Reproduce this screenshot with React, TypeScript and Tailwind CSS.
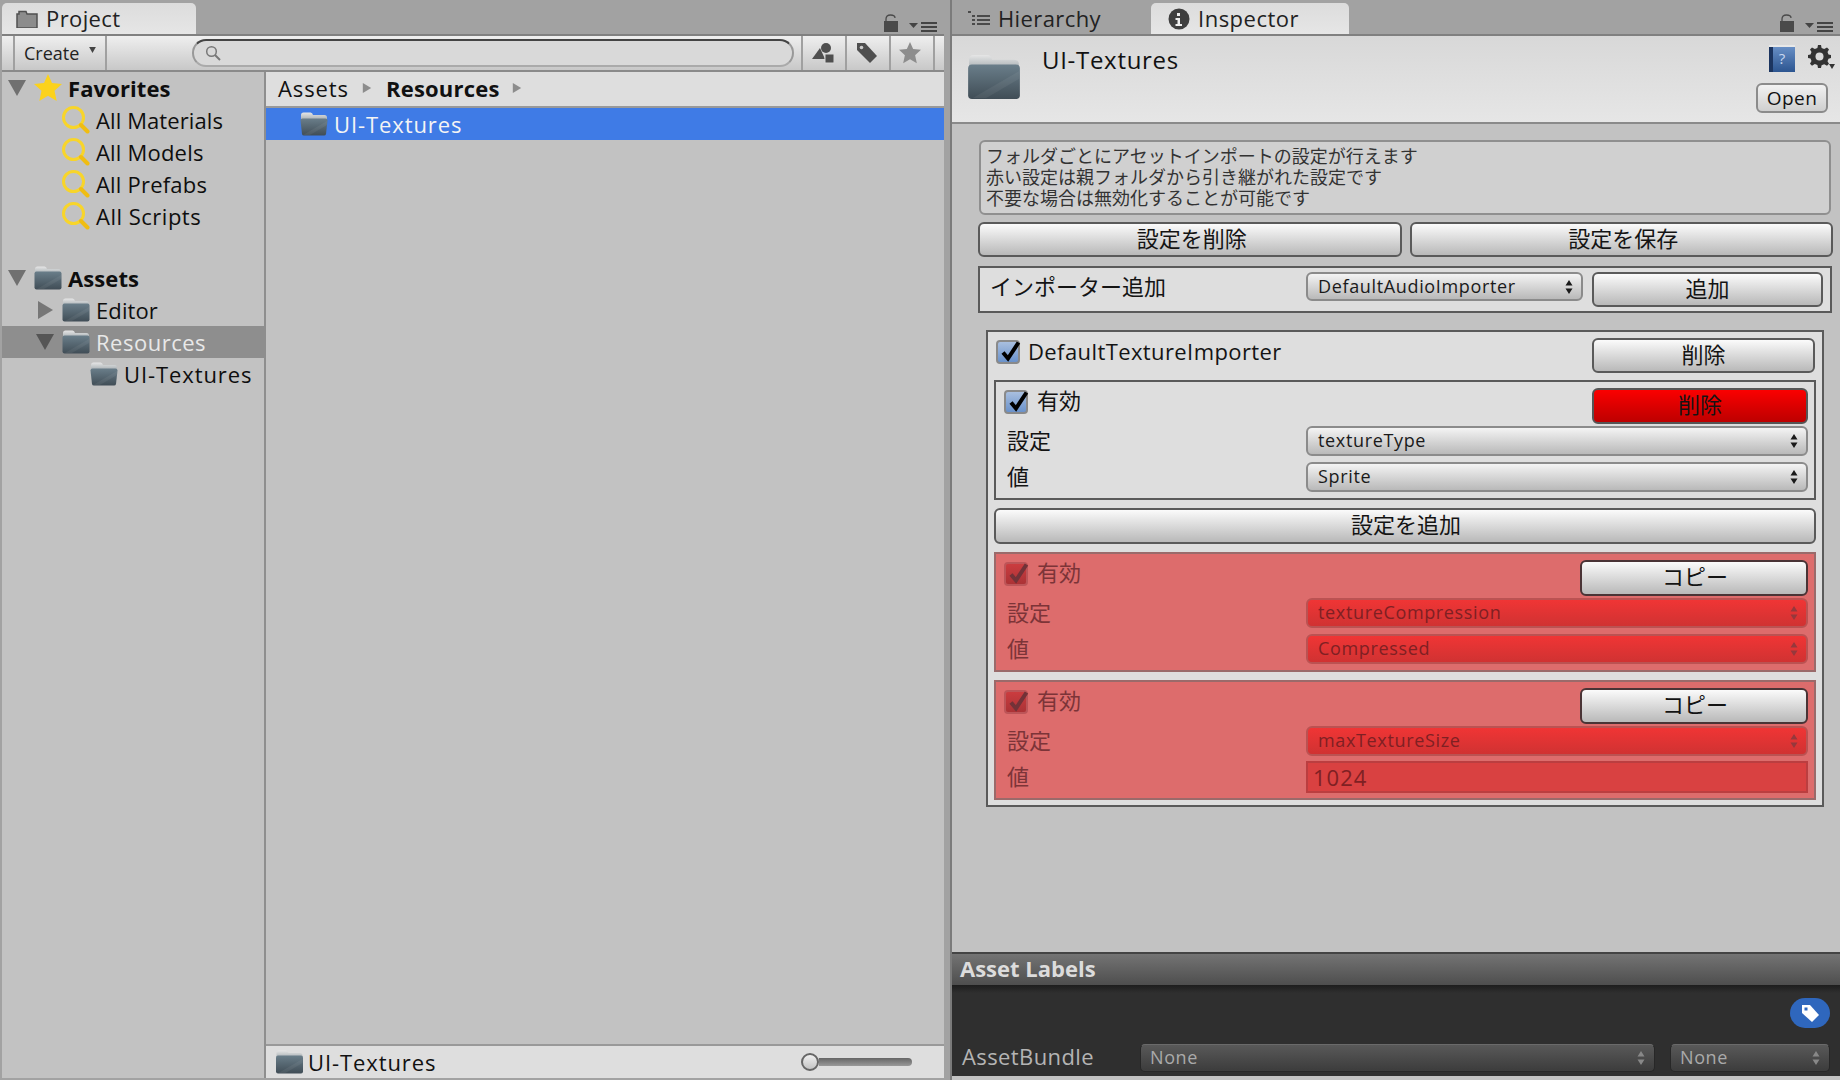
import type { ReactNode } from "react"

function Folder({ className = "w-[28px] h-[24px]", open = false }: { className?: string; open?: boolean }) {
  return (
    <svg viewBox="0 0 28 24" className={`shrink-0 ${className}`}>
      <defs>
        <linearGradient id="folderBody" x1="0" y1="0" x2="0" y2="1">
          <stop offset="0" stopColor="#6a7e8a" />
          <stop offset="1" stopColor="#404d56" />
        </linearGradient>
        <linearGradient id="folderTab" x1="0" y1="0" x2="0" y2="1">
          <stop offset="0" stopColor="#e6e6e6" />
          <stop offset="1" stopColor="#a4acb0" />
        </linearGradient>
      </defs>
      <path d="M1 8V3q0-2.500 2.500-2.500h7q2 0 2.500 2.500h11.500q2.500 0 2.500 2.500V8z" fill="url(#folderTab)" />
      {open ? (
        <path d="M0.500 8.500q0-2 2-2h23q2 0 2 2l-1.500 13.500q-.2 1.500-2 1.500H4q-1.800 0-2-1.500z" fill="url(#folderBody)" />
      ) : (
        <rect x="0.500" y="5.500" width="27" height="18" rx="2" fill="url(#folderBody)" />
      )}
      <path d="M27 9v4L10 23H3z" fill="#ffffff" opacity="0.06" />
    </svg>
  )
}

function Search() {
  return (
    <svg viewBox="0 0 28 28" className="w-[28px] h-[28px] shrink-0">
      <circle cx="11.500" cy="11.500" r="10" fill="none" stroke="#f8d52a" strokeWidth="3" />
      <path d="M19 19l6.500 6.500" stroke="#f0bd12" strokeWidth="4" strokeLinecap="round" />
    </svg>
  )
}

function Star({ fill = "#fbd21c", className = "w-[28px] h-[28px]" }: { fill?: string; className?: string }) {
  return (
    <svg viewBox="0 0 28 28" className={`shrink-0 ${className}`}>
      <path d="M14 0l4 9 10 1-7.500 6.800L22.700 27 14 21.800 5.300 27l2.200-10.200L0 10l10-1z" fill={fill} />
    </svg>
  )
}

function TriDown({ className = "" }: { className?: string }) {
  return (
    <svg viewBox="0 0 18 16" className={`shrink-0 ${className}`}>
      <path d="M0 0h18L9 16z" fill="currentColor" />
    </svg>
  )
}

function TriRight({ className = "" }: { className?: string }) {
  return (
    <svg viewBox="0 0 15 18" className={`shrink-0 ${className}`}>
      <path d="M0 0l15 9L0 18z" fill="currentColor" />
    </svg>
  )
}

function Updown({ className = "text-[#222]" }: { className?: string }) {
  return (
    <svg viewBox="0 0 8 14" className={`w-[8px] h-[14px] shrink-0 ${className}`}>
      <path d="M4 0l3.500 5.500h-7zM4 14L.5 8.500h7z" fill="currentColor" />
    </svg>
  )
}

function LockMenu() {
  return (
    <div className="ml-auto flex items-end gap-[11px] pb-[2px] pr-[6px]">
      <svg viewBox="0 0 14 18" className="w-[14px] h-[18px]">
        <path d="M2 8V5q0-4 4.500-4T11 4" fill="none" stroke="#4a4a4a" strokeWidth="1.300" />
        <rect x="0" y="7" width="14" height="11" fill="#4a4a4a" />
      </svg>
      <svg viewBox="0 0 29 11" className="w-[29px] h-[11px]">
        <path d="M0 2h9L4.500 7z" fill="#444" />
        <path d="M12 1h16v2H12zM12 5h16v2H12zM12 9h16v2H12z" fill="#444" />
      </svg>
    </div>
  )
}

function TreeRow({ pad, arrow, icon, bold, active, track = "tracking-[0.1px]", children }: { pad: string; arrow?: ReactNode; icon: ReactNode; bold?: boolean; active?: boolean; track?: string; children: ReactNode }) {
  return (
    <div className={`h-[32px] flex items-center ${pad} ${active ? "bg-[#8e8e8e] text-[#e8e8e8]" : "text-[#0e0e0e]"} ${bold ? "font-bold" : ""}`}>
      {arrow}
      {icon}
      <span className={`ml-[6px] ${track}`}>{children}</span>
    </div>
  )
}

function Btn({ className = "", red, dark, children }: { className?: string; red?: boolean; dark?: boolean; children: ReactNode }) {
  const skin = red
    ? "bg-linear-to-b from-[#fb0000] to-[#bd0000] border-[#555]"
    : dark
      ? "bg-linear-to-b from-[#fbfbfb] to-[#b9b9b9] border-[#4a3436]"
      : "bg-linear-to-b from-[#fbfbfb] to-[#b9b9b9] border-[#5a5a5a]"
  return <div className={`flex items-center justify-center rounded-[6px] border-2 pb-[4px] text-[22px] text-[#141414] ${skin} ${className}`}>{children}</div>
}

function Dropdown({ red, className = "h-[30px] flex-1", children }: { red?: boolean; className?: string; children: ReactNode }) {
  return (
    <div
      className={`flex items-center justify-between rounded-[6px] border-2 pl-[10px] pr-[8px] text-[18px] tracking-[0.65px] ${className} ${
        red ? "bg-linear-to-b from-[#f03535] to-[#d03232] border-[#bb5252] text-[#7f2023]" : "bg-linear-to-b from-[#f4f4f4] to-[#b9b9b9] border-[#8b8b8b] text-[#1a1a1a]"
      }`}
    >
      <span className="pb-[2px]">{children}</span>
      <Updown className={red ? "text-[#96383c]" : "text-[#1a1a1a]"} />
    </div>
  )
}

function Check({ red }: { red?: boolean }) {
  return (
    <div
      className={`relative w-[24px] h-[24px] shrink-0 rounded-[4px] border-2 ${
        red ? "bg-linear-to-b from-[#cb3c3f] to-[#ab3336] border-[#bd5558]" : "bg-linear-to-b from-[#a9bfdf] to-[#6a92cb] border-[#8a8a8a]"
      }`}
    >
      <svg viewBox="0 0 24 24" className="absolute left-[1px] -top-[2px] w-[24px] h-[24px]">
        <path d="M4 12.500l5 6L19.500 2.500" fill="none" stroke={red ? "#723238" : "#000"} strokeWidth="4" />
      </svg>
    </div>
  )
}

function SettingBox({ red, setting, value }: { red?: boolean; setting: string; value: string }) {
  const text = red ? "text-[#7c3438]" : "text-[#141414]"
  return (
    <div className={`h-[120px] border-2 pt-[6px] pl-[8px] pr-[6px] text-[22px] ${text} ${red ? "bg-[#dd6c6c] border-[#9a6a6a]" : "border-[#5a5a5a]"}`}>
      <div className="h-[36px] flex items-center">
        <div className="-mt-[8px] flex items-center">
          <Check red={red} />
          <span className="ml-[9px] pb-[4px]">有効</span>
        </div>
        {red ? (
          <Btn dark className="ml-auto w-[228px] h-[36px] pl-[2px]">コピー</Btn>
        ) : (
          <Btn red className="ml-auto w-[216px] h-[36px]">削除</Btn>
        )}
      </div>
      <div className="mt-[2px] h-[30px] flex items-center">
        <span className="ml-[3px] w-[299px] shrink-0 pb-[3px]">設定</span>
        <Dropdown red={red}>{setting}</Dropdown>
      </div>
      <div className="mt-[6px] h-[30px] flex items-center">
        <span className="ml-[3px] w-[299px] shrink-0 pb-[2px]">値</span>
        {value === "1024" ? (
          <div className="h-[32px] flex-1 flex items-center border-2 border-[#bb3e40] bg-[#d94141] pl-[5px] text-[22px] tracking-[1px] text-[#7f2023]">1024</div>
        ) : (
          <Dropdown red={red}>{value}</Dropdown>
        )}
      </div>
    </div>
  )
}

function ToolSep() {
  return <div className="w-[2px] h-full bg-[#a0a0a0]" />
}

export default function App() {
  return (
    <div className="w-[1840px] h-[1080px] overflow-hidden flex bg-[#a2a2a2] font-['Open_Sans','Noto_Sans_CJK_JP',sans-serif] text-[22px] leading-none">
      {/* Project window */}
      <div className="w-[944px] h-full shrink-0 flex flex-col pb-[2px] pl-[2px]">
        <div className="h-[34px] flex items-end">
          <div className="w-[194px] h-[31px] flex items-center rounded-t-[5px] bg-linear-to-b from-[#dcdcdc] to-[#e6e6e6] pl-[14px] text-[#222]">
            <svg viewBox="0 0 22 18" className="w-[22px] h-[18px]">
              <path d="M3 4V1.500h7L11 4h10v14H1V4z" fill="#8c8c8c" stroke="#505050" strokeWidth="1.500" />
            </svg>
            <span className="ml-[8px] pb-[2px] tracking-[0.4px]">Project</span>
          </div>
          <LockMenu />
        </div>
        <div className="h-[2px] bg-[#808080]" />
        <div className="h-[34px] flex items-stretch bg-linear-to-b from-[#efefef] to-[#c8c8c8]">
          <div className="ml-[11px] w-[94px] flex items-center border-x-2 border-[#a0a0a0] pl-[9px] text-[18px] text-[#222]">
            Create
            <TriDown className="ml-[9px] mb-[6px] w-[9px] h-[6px] text-[#444]" />
          </div>
          <div className="ml-[85px] my-[3px] w-[602px] flex items-center rounded-full border-2 border-t-[#444] border-x-[#999] border-b-[#aaa] bg-[#d9d9d9] pl-[11px]">
            <svg viewBox="0 0 16 16" className="w-[16px] h-[16px]">
              <circle cx="6.500" cy="6.500" r="4.800" fill="none" stroke="#777" strokeWidth="1.500" />
              <path d="M10 10l5 5" stroke="#777" strokeWidth="2" />
            </svg>
          </div>
          <div className="ml-[7px] flex items-center">
            <ToolSep />
            <div className="w-[42px] h-full flex items-center justify-center pr-[2px]">
              <svg viewBox="0 0 22 22" className="w-[22px] h-[22px]">
                <path d="M8 6L0 17h13z" fill="#4f4f4f" />
                <circle cx="14" cy="6" r="5" fill="#4f4f4f" />
                <rect x="13" y="12" width="9" height="9" fill="#4f4f4f" stroke="#d8d8d8" />
              </svg>
            </div>
            <ToolSep />
            <div className="w-[42px] h-full flex items-center justify-center pr-[2px]">
              <svg viewBox="0 0 22 22" className="w-[22px] h-[22px]">
                <path d="M1 1h8l12 13-7 7L1 8z" fill="#4f4f4f" />
                <circle cx="5.500" cy="5.500" r="1.800" fill="#ccc" />
              </svg>
            </div>
            <ToolSep />
            <div className="w-[42px] h-full flex items-center justify-center pr-[4px]">
              <Star fill="#8d8d8d" className="w-[22px] h-[22px]" />
            </div>
            <ToolSep />
          </div>
        </div>
        <div className="h-[2px] bg-[#8a8a8a]" />
        <div className="flex-1 min-h-0 flex">
          {/* Favorites and folder tree */}
          <div className="w-[262px] shrink-0 bg-[#c2c2c2]">
            <TreeRow pad="pl-[6px]" bold arrow={<TriDown className="mr-[8px] w-[18px] h-[16px] text-[#707070]" />} icon={<Star />}>Favorites</TreeRow>
            <TreeRow pad="pl-[60px]" icon={<Search />}>All Materials</TreeRow>
            <TreeRow pad="pl-[60px]" icon={<Search />} track="tracking-[0.2px]">All Models</TreeRow>
            <TreeRow pad="pl-[60px]" icon={<Search />} track="tracking-[0.2px]">All Prefabs</TreeRow>
            <TreeRow pad="pl-[60px]" icon={<Search />} track="tracking-[0.5px]">All Scripts</TreeRow>
            <div className="h-[30px]" />
            <TreeRow pad="pl-[6px]" bold arrow={<TriDown className="mr-[8px] w-[18px] h-[16px] text-[#707070]" />} icon={<Folder />}>Assets</TreeRow>
            <TreeRow pad="pl-[36px]" arrow={<TriRight className="mr-[9px] w-[15px] h-[18px] text-[#777]" />} icon={<Folder />}>Editor</TreeRow>
            <TreeRow pad="pl-[34px]" active track="tracking-[0.5px]" arrow={<TriDown className="mr-[8px] w-[18px] h-[16px] text-[#555]" />} icon={<Folder />}>Resources</TreeRow>
            <TreeRow pad="pl-[88px]" track="tracking-[0.9px]" icon={<Folder open />}>UI-Textures</TreeRow>
          </div>
          <div className="w-[2px] bg-[#8e8e8e]" />
          {/* Asset list */}
          <div className="flex-1 flex flex-col bg-[#c2c2c2]">
            <div className="h-[34px] flex items-center bg-[#dedede] pl-[11px] pb-[2px] text-[#111]">
              <span className="ml-[1px] tracking-[0.9px]">Assets</span>
              <TriRight className="ml-[13px] mr-[14px] w-[10px] h-[10px] text-[#8c8c8c]" />
              <span className="font-bold tracking-[0.2px]">Resources</span>
              <TriRight className="ml-[12px] w-[10px] h-[10px] text-[#8c8c8c]" />
            </div>
            <div className="h-[2px] bg-[#999]" />
            <div className="h-[32px] flex items-center bg-[#3f7be6] pl-[34px] text-[#f4f4f4]">
              <Folder open />
              <span className="ml-[6px] tracking-[0.9px]">UI-Textures</span>
            </div>
            <div className="flex-1" />
            <div className="h-[2px] bg-[#999]" />
            <div className="h-[32px] flex items-center bg-[#dedede] pl-[9px] text-[#111]">
              <Folder className="w-[29px] h-[24px]" />
              <span className="ml-[4px] tracking-[0.9px]">UI-Textures</span>
              <div className="ml-auto mr-[32px] flex items-center">
                <div className="w-[18px] h-[18px] rounded-full border-2 border-[#666] bg-linear-to-b from-[#f0f0f0] to-[#c4c4c4]" />
                <div className="w-[93px] h-[8px] rounded-r-full bg-linear-to-b from-[#666] to-[#999]" />
              </div>
            </div>
          </div>
        </div>
      </div>

      <div className="ml-[6px] w-[2px] h-full bg-[#7b7b7b]" />

      {/* Inspector window */}
      <div className="flex-1 min-w-0 h-full flex flex-col">
        <div className="h-[34px] flex items-end">
          <div className="ml-[16px] w-[183px] h-[31px] flex items-center text-[#222]">
            <svg viewBox="0 0 22 16" className="w-[22px] h-[16px]">
              <path d="M0 0h3v2H0zM4 4h3v2H4zM4 8h3v2H4zM4 12h3v2H4zM9 4h13v2H9zM9 8h13v2H9zM9 12h13v2H9z" fill="#4a4a4a" />
            </svg>
            <span className="ml-[8px] pb-[2px] tracking-[0.4px]">Hierarchy</span>
          </div>
          <div className="w-[198px] h-[31px] flex items-center rounded-t-[5px] bg-linear-to-b from-[#dcdcdc] to-[#e6e6e6] pl-[17px] text-[#222]">
            <svg viewBox="0 0 22 22" className="w-[22px] h-[22px]">
              <circle cx="11" cy="11" r="10.500" fill="#3f3f3f" />
              <path d="M9 5h3v3H9zM7.500 10H12v6h2v2H7.500v-2h2v-4h-2z" fill="#eee" />
            </svg>
            <span className="ml-[8px] pb-[2px] tracking-[0.5px]">Inspector</span>
          </div>
          <LockMenu />
        </div>
        <div className="h-[2px] bg-[#808080]" />
        <div className="flex-1 min-h-0 flex flex-col bg-[#c2c2c2]">
          <div className="h-[86px] shrink-0 flex bg-linear-to-b from-[#d8d8d8] to-[#e6e6e6] pl-[14px] pr-[5px] text-[#111]">
            <Folder className="mt-[18px] w-[56px] h-[46px]" />
            <span className="ml-[20px] mt-[12px] text-[24px] tracking-[0.7px]">UI-Textures</span>
            <div className="ml-auto w-[80px] flex flex-col items-stretch">
              <div className="mt-[9px] h-[27px] flex items-start justify-end gap-[12px]">
                <div className="relative w-[26px] h-[27px] shrink-0 flex items-center justify-center bg-linear-to-b from-[#6c93c9] to-[#2c5590] text-[15px] text-[#c8d8f0]">
                  <div className="absolute inset-y-0 left-0 w-[4px] bg-[#1c3560]" />
                  <div className="absolute inset-x-0 top-0 h-[2px] bg-[#e8e8e8]" />
                  ?
                </div>
                <svg viewBox="0 0 28 24" className="w-[28px] h-[24px] shrink-0">
                  <path d="M11 0h3l.6 3 2.600 1L20 2.500 22 4.500 20.500 7l1 2.500L24 10v3l-2.500.7-1 2.500 1.500 2.500-2 2L17.200 19.200l-2.600 1L14 23h-3l-.6-3-2.600-1L5 20.700 3 18.700 4.500 16l-1-2.500L1 13v-3l2.500-.5 1-2.500L3 4.500l2-2L7.800 4l2.600-1z" fill="#333" />
                  <circle cx="12.500" cy="11.500" r="4" fill="#dadada" />
                  <path d="M22 19h6l-3 5z" fill="#333" />
                </svg>
              </div>
              <div className="mt-[11px] ml-[1px] mr-[7px] h-[30px] flex items-center justify-center rounded-[6px] border-2 border-[#8b8b8b] bg-linear-to-b from-[#f2f2f2] to-[#cfcfcf] text-[19px] tracking-[0.5px] text-[#111]">Open</div>
            </div>
          </div>
          <div className="h-[2px] shrink-0 bg-[#8a8a8a]" />

          <div className="flex-1 min-h-0 pl-[26px] pr-[8px] pt-[16px]">
            <div className="h-[75px] ml-[1px] mr-[1px] rounded-[6px] border-2 border-[#8f8f8f] bg-[#d0d0d0] pl-[5px] pt-[4px] text-[18px] leading-[21px] text-[#333]">
              <div>フォルダごとにアセットインポートの設定が行えます</div>
              <div>赤い設定は親フォルダから引き継がれた設定です</div>
              <div>不要な場合は無効化することが可能です</div>
            </div>
            <div className="mt-[7px] h-[35px] flex gap-[8px] -mr-[1px]">
              <Btn className="flex-1 pl-[4px]">設定を削除</Btn>
              <Btn className="flex-1 pl-[4px]">設定を保存</Btn>
            </div>
            <div className="mt-[9px] h-[47px] border-2 border-[#5a5a5a] bg-[#dedede] pl-[10px] pr-[7px] pt-[4px] flex items-start text-[#141414]">
              <span className="mt-[3px] w-[316px] shrink-0">インポーター追加</span>
              <Dropdown className="h-[29px] w-[277px] shrink-0">DefaultAudioImporter</Dropdown>
              <Btn className="ml-[9px] flex-1 h-[35px]">追加</Btn>
            </div>

            {/* Folder importer rules */}
            <div className="mt-[17px] mx-[8px] h-[477px] border-2 border-[#5a5a5a] bg-[#dedede] pt-[6px] px-[6px] text-[#141414]">
              <div className="h-[35px] flex items-center">
                <div className="-mt-[8px] ml-[2px] flex items-center">
                  <Check />
                  <span className="ml-[8px] pb-[2px] tracking-[0.4px]">DefaultTextureImporter</span>
                </div>
                <Btn className="ml-auto mr-[1px] w-[223px] h-[35px]">削除</Btn>
              </div>
              <div className="mt-[7px] flex flex-col gap-[8px]">
                <SettingBox setting="textureType" value="Sprite" />
                <Btn className="h-[36px] pl-[2px]">設定を追加</Btn>
                <SettingBox red setting="textureCompression" value="Compressed" />
                <SettingBox red setting="maxTextureSize" value="1024" />
              </div>
            </div>
          </div>

          {/* Asset labels footer */}
          <div className="h-[124px] mb-[4px] shrink-0 flex flex-col bg-[#2f2f2f]">
            <div className="h-[2px] bg-[#444]" />
            <div className="h-[31px] flex items-center bg-linear-to-b from-[#747474] to-[#4e4e4e] pl-[8px] pb-[4px] font-bold text-[22px] text-[#dcdcdc]">Asset Labels</div>
            <div className="h-[8px] bg-linear-to-b from-[#1d1d1d] to-[#2f2f2f]" />
            <div className="h-[30px] mt-[5px] flex justify-end pr-[10px]">
              <div className="w-[40px] h-[30px] flex items-center justify-center rounded-full bg-[#2f67bd]">
                <svg viewBox="0 0 20 20" className="w-[20px] h-[20px]">
                  <path d="M2 2h8l9 10-7 7-10-9z" fill="#fff" />
                  <rect x="4.500" y="4.500" width="3" height="3" fill="#2f67bd" />
                </svg>
              </div>
            </div>
            <div className="mt-[16px] h-[28px] flex items-center pl-[10px] pr-[10px] text-[#b4b4b4]">
              <span className="w-[178px] shrink-0 pb-[4px] tracking-[0.4px] text-[22px]">AssetBundle</span>
              <div className="flex-1 h-[28px] flex items-center justify-between rounded-[5px] border border-[#272727] border-t-[#6a6a6a] bg-linear-to-b from-[#595959] to-[#3c3c3c] pl-[9px] pr-[9px] text-[18px] tracking-[0.6px] text-[#aaa]">
                <span className="pb-[2px]">None</span>
                <Updown className="text-[#888]" />
              </div>
              <div className="ml-[15px] w-[160px] h-[28px] flex items-center justify-between rounded-[5px] border border-[#272727] border-t-[#6a6a6a] bg-linear-to-b from-[#595959] to-[#3c3c3c] pl-[9px] pr-[9px] text-[18px] tracking-[0.6px] text-[#aaa]">
                <span className="pb-[2px]">None</span>
                <Updown className="text-[#888]" />
              </div>
            </div>
          </div>
        </div>
      </div>
    </div>
  )
}
